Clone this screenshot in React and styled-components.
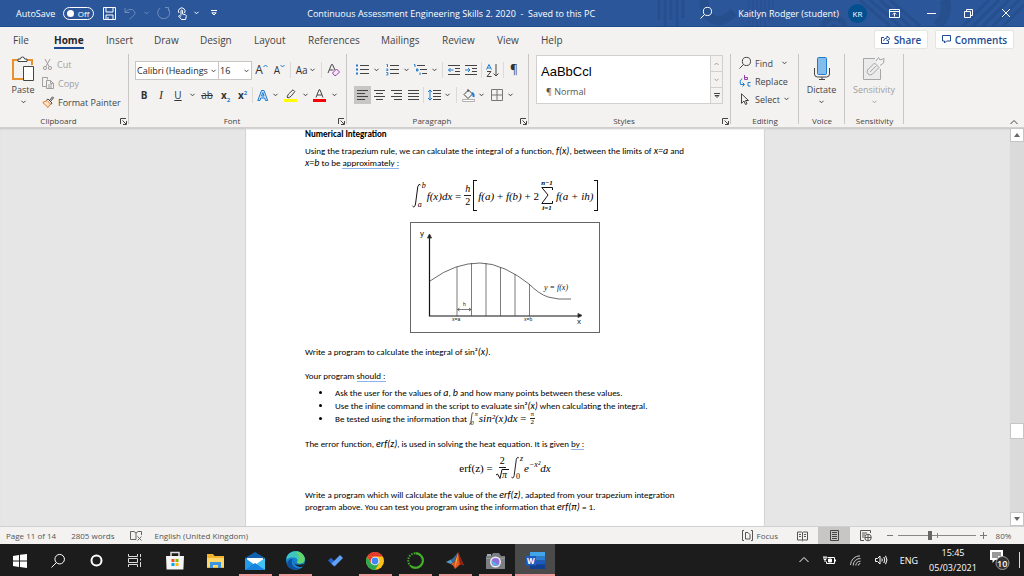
import React from 'react';
import styled, { createGlobalStyle } from 'styled-components';

const GlobalStyle = createGlobalStyle`
  * {
    box-sizing: border-box;
  }
  html, body, #root {
    height: 100%;
  }
  body {
    margin: 0;
    overflow: hidden;
    font-family: 'Open Sans', 'Noto Sans', sans-serif;
    font-size: 10px;
    color: #444;
  }
  button, select, input {
    font: inherit;
    color: inherit;
    margin: 0;
    padding: 0;
    border: 0;
    background: none;
  }
  svg {
    display: block;
    flex: none;
    overflow: visible;
  }
`;

const Window = styled.div`
  display: flex;
  flex-direction: column;
  height: 100vh;
  background: #e6e6e6;
`;

/* ---------- title bar ---------- */

const TitleBar = styled.header`
  position: relative;
  display: flex;
  align-items: center;
  height: 27px;
  flex: none;
  background: #2b579a;
  border-bottom: 1px solid #1f4a8c;
  color: #fff;
  font-size: 9px;
`;

const TitlePattern = styled.svg`
  position: absolute;
  top: 0;
  right: 0;
  overflow: hidden;
`;

const QuickAccess = styled.div`
  display: flex;
  align-items: center;
  flex: none;
  padding-left: 16px;
`;

const AutoSave = styled.label`
  display: flex;
  align-items: center;
  flex: none;
  gap: 8px;
  width: 84px;
`;

const Pill = styled.span`
  display: flex;
  align-items: center;
  justify-content: space-between;
  width: 31px;
  height: 13px;
  padding: 0 4px 0 3px;
  border: 1px solid #fff;
  border-radius: 7px;
  font-size: 8px;
  line-height: 11px;

  input {
    appearance: none;
    width: 7px;
    height: 7px;
    border-radius: 50%;
    background: #fff;
  }
`;

const DocTitle = styled.h1`
  flex: 1;
  margin: 0;
  padding-right: 20px;
  font-size: 9px;
  font-weight: 400;
  text-align: center;
  white-space: nowrap;
`;

const Account = styled.div`
  position: relative;
  display: flex;
  align-items: center;
  gap: 9px;
  padding-right: 9px;
`;

const UserName = styled.span`
  padding-left: 13px;
  white-space: nowrap;
`;

const Avatar = styled.span`
  width: 19px;
  height: 19px;
  border-radius: 50%;
  background: #03508f;
  font-size: 8px;
  line-height: 19px;
  text-align: center;
`;

const WindowButtons = styled.div`
  position: relative;
  display: flex;
`;

/* every icon button, the width decides how the row is spread */
const Tool = styled.button`
  display: flex;
  align-items: center;
  justify-content: center;
  flex: none;
  width: ${(p) => p.$w || 18}px;
  height: ${(p) => p.$h || 18}px;
  background: ${(p) => (p.$active ? '#c8c6c4' : 'transparent')};
  opacity: ${(p) => (p.disabled ? 0.4 : 1)};
`;

/* ---------- tabs ---------- */

const TabRow = styled.nav`
  display: flex;
  align-items: center;
  flex: none;
  height: 25px;
  padding: 0 10px 0 13px;
  background: #f3f2f1;
`;

const Tab = styled.button`
  display: flex;
  align-items: flex-end;
  width: ${(p) => p.$w}px;
  height: 25px;
  padding-bottom: 3px;
  white-space: nowrap;
  font-size: 10px;
  color: ${(p) => (p.$current ? '#262626' : '#444')};
  font-weight: ${(p) => (p.$current ? 700 : 400)};

  span {
    line-height: 14px;
    border-bottom: 2px solid ${(p) => (p.$current ? '#1e4a94' : 'transparent')};
  }
`;

const TabActions = styled.div`
  display: flex;
  gap: 7px;
  margin-left: auto;
`;

const ActionButton = styled.button`
  display: flex;
  align-items: center;
  justify-content: center;
  gap: 4px;
  width: ${(p) => p.$w}px;
  height: 19px;
  border: 1px solid #e6e4e2;
  border-radius: 2px;
  background: #fff;
  color: #1e4a94;
  font-size: 10px;
  font-weight: 600;
`;

/* ---------- ribbon ---------- */

const Ribbon = styled.section`
  display: flex;
  flex: none;
  height: 76px;
  padding-top: 2px;
  background: #f3f2f1;
  border-bottom: 1px solid #d2d0ce;
`;

const Group = styled.div`
  display: flex;
  flex-direction: column;
  width: ${(p) => p.$w}px;
  background: linear-gradient(#c8c6c4, #c8c6c4) right top / 1px 70px no-repeat;
`;

const GroupBody = styled.div`
  display: flex;
  flex: 1;
  flex-direction: ${(p) => (p.$row ? 'row' : 'column')};
  gap: ${(p) => p.$gap || 0}px;
  padding: ${(p) => p.$pad || '0'};
`;

const GroupFoot = styled.div`
  display: flex;
  align-items: center;
  height: 12px;
  font-size: 8px;
  line-height: 12px;

  span {
    flex: 1;
    text-align: center;
  }
`;

const ToolRow = styled.div`
  display: flex;
  align-items: center;
  height: 18px;
`;

const Rule = styled.i`
  flex: none;
  width: 1px;
  height: 16px;
  margin: 0 ${(p) => p.$r || 1}px 0 ${(p) => p.$l || 2}px;
  background: #dcdad8;
`;

const Letter = styled.span`
  font-size: ${(p) => p.$size || 10}px;
  line-height: 14px;
  font-weight: ${(p) => (p.$bold ? 700 : 400)};
  font-style: ${(p) => (p.$italic ? 'italic' : 'normal')};
  font-family: ${(p) => (p.$italic ? "'Liberation Serif', serif" : 'inherit')};
  text-decoration: ${(p) => p.$line || 'none'};
  color: #333;

  sub, sup {
    font-size: 6px;
    line-height: 0;
    color: #1f7bd0;
  }
`;

const Big = styled.button`
  display: flex;
  flex-direction: column;
  align-items: center;
  width: ${(p) => p.$w}px;
  padding-top: 2px;
  font-size: 9px;
  line-height: 14px;
  color: ${(p) => (p.disabled ? '#a19f9d' : '#444')};

  span {
    padding: 1px 0 3px;
  }
`;

const Stack = styled.div`
  display: flex;
  flex-direction: column;
  gap: 1px;
  padding-top: 1px;
`;

const Command = styled.button`
  display: flex;
  align-items: center;
  gap: 4px;
  height: 18px;
  font-size: 9px;
  white-space: nowrap;
  color: ${(p) => (p.disabled ? '#a19f9d' : '#444')};

  span {
    margin-right: ${(p) => p.$space || 0}px;
  }
`;

const Picker = styled.label`
  position: relative;
  display: block;
  width: ${(p) => p.$w}px;
  height: 19px;
  border: 1px solid #c8c6c4;
  border-left-width: ${(p) => (p.$joined ? 0 : 1)}px;
  background: #fff;

  select {
    appearance: none;
    width: 100%;
    height: 17px;
    padding: 0 8px 0 1px;
    font-size: 9px;
    color: #262626;
  }
  svg {
    position: absolute;
    right: 2px;
    top: 7px;
  }
`;

const Gallery = styled.div`
  display: flex;
  width: 187px;
  height: 49px;
  border: 1px solid #d2d0ce;
  background: #fff;
`;

const StyleCard = styled.button`
  display: flex;
  flex: 1;
  flex-direction: column;
  padding: 2px 0 0 4px;
  text-align: left;

  b {
    font: 400 13px 'Liberation Sans', Arial, sans-serif;
    line-height: 28px;
    color: #000;
  }
  span {
    padding-left: 5px;
    font-size: 9px;
    line-height: 12px;
    color: #555;
  }
`;

const GallerySteps = styled.div`
  display: flex;
  flex-direction: column;
  width: 12px;
  background: #f3f2f1;
  border-left: 1px solid #d2d0ce;

  button {
    display: flex;
    flex: 1;
    align-items: center;
    justify-content: center;
    border-bottom: 1px solid #d2d0ce;
  }
  button:last-child {
    border: 0;
  }
`;

const Collapse = styled.button`
  align-self: flex-end;
  margin: 0 6px 0 auto;
  padding-bottom: 2px;
`;

/* ---------- document ---------- */

const Workspace = styled.main`
  display: flex;
  flex: 1;
  min-height: 0;
`;

const Canvas = styled.div`
  flex: 1;
  overflow: hidden;
  box-shadow: inset 0 2px 2px -1px #c4c4c4;
`;

const Page = styled.article`
  width: 520px;
  min-height: 100%;
  margin: 0 auto;
  padding: 0 59px 12px;
  background: #fff;
  border: solid #d4d4d4;
  border-width: 0 1px;
  box-shadow: inset 0 2px 2px -1px #c4c4c4;
  font-family: Carlito, Lato, sans-serif;
  font-size: 9px;
  font-weight: 500;
  line-height: 12px;
  color: #000;
`;

const Heading = styled.h2`
  margin: 0;
  font-size: 9px;
  line-height: 12px;
`;

const Para = styled.p`
  margin: ${(p) => p.$top}px 0 0;
  white-space: nowrap;

  i {
    font-size: 10px;
    line-height: 0;
  }
  u {
    text-decoration: none;
    box-shadow: 0 1px 0 #8db4ea;
  }
`;

const Bullets = styled.ul`
  margin: 4px 0 0;
  padding: 0 0 0 27px;
  line-height: 13px;
  white-space: nowrap;

  li {
    padding-left: 3px;
  }
  li > i {
    font-size: 10px;
    line-height: 0;
  }
`;

const Formula = styled.div`
  display: flex;
  align-items: center;
  justify-content: center;
  height: ${(p) => p.$h}px;
  font-family: 'Liberation Serif', serif;
  font-size: 11px;
  line-height: 12px;
  white-space: pre;

  sup {
    font-size: 8px;
    line-height: 0;
  }
`;

const Inline = styled.span`
  display: inline-flex;
  align-items: center;
  height: 13px;
  vertical-align: top;
  font-family: 'Liberation Serif', serif;
  font-size: 11px;
`;

const Frac = styled.span`
  display: inline-flex;
  flex-direction: column;
  align-items: center;
  margin: 0 2px 0 3px;
  font-size: ${(p) => p.$size || 10}px;
  line-height: ${(p) => p.$lh || 12}px;

  > span:first-child {
    padding: 0 1px;
    border-bottom: 1px solid #222;
  }
`;

const Limits = styled.span`
  display: inline-flex;
  flex-direction: column;
  justify-content: space-between;
  height: ${(p) => p.$h}px;
  margin: 0 1px 0 -3px;
  font-size: ${(p) => p.$size || 8}px;
  line-height: ${(p) => p.$size || 8}px;

  > i:first-child {
    padding-left: 4px;
  }
`;

const Sum = styled.span`
  display: inline-flex;
  flex-direction: column;
  align-items: center;
  margin: 0 3px 0 2px;
  font-size: 7px;
  font-weight: 700;
  line-height: 6px;
  gap: 1px;
`;

const Bracket = styled.span`
  display: flex;
  align-items: center;
  height: 29px;

  &::before, &::after {
    content: '';
    width: 3px;
    height: 29px;
    border: 1px solid #111;
  }
  &::before {
    border-right: 0;
    margin-right: 1px;
  }
  &::after {
    border-left: 0;
    margin-left: 1px;
  }
`;

const Figure = styled.figure`
  display: flex;
  justify-content: center;
  margin: 0;
`;

const ScrollBar = styled.div`
  display: flex;
  flex-direction: column;
  width: 14px;
  background: #dadada;

  button {
    display: flex;
    align-items: center;
    justify-content: center;
    height: 14px;
    background: #fff;
    border: 1px solid #c6c6c6;
  }
  i {
    flex: 283 0 0;
  }
  b {
    height: 16px;
    background: #fff;
    border: 1px solid #c6c6c6;
  }
  b + i {
    flex: 73 0 0;
  }
`;

/* ---------- status bar ---------- */

const StatusBar = styled.footer`
  display: flex;
  align-items: center;
  flex: none;
  height: 18px;
  padding: 0 7px 0 6px;
  background: #f3f2f1;
  border-top: 1px solid #d2d0ce;
  font-size: 8px;
  color: #555;
`;

const StatusItem = styled.button`
  display: flex;
  align-items: center;
  gap: 4px;
  margin-right: ${(p) => p.$end || 15}px;
  white-space: nowrap;
`;

const Views = styled.div`
  display: flex;
  align-items: center;
  margin-left: auto;
`;

const Zoom = styled.input`
  appearance: none;
  width: 78px;
  height: 11px;
  background: linear-gradient(#8a8886, #8a8886) 0 5px / 100% 1px no-repeat,
    linear-gradient(#8a8886, #8a8886) 39px 3px / 1px 5px no-repeat;

  &::-webkit-slider-thumb {
    appearance: none;
    width: 4px;
    height: 9px;
    background: #666;
  }
`;

/* ---------- taskbar ---------- */

const TaskBar = styled.footer`
  display: flex;
  flex: none;
  height: 32px;
  background: #1c1c1c;
  color: #fff;
`;

const TaskButton = styled.button`
  display: flex;
  align-items: center;
  justify-content: center;
  width: ${(p) => p.$w || 40}px;
  padding-top: 1px;
  background: ${(p) => (p.$front ? '#4a4a4a' : 'transparent')};
  background-image: ${(p) =>
    p.$open ? 'linear-gradient(#f09a9d, #f09a9d)' : 'none'};
  background-repeat: no-repeat;
  background-position: bottom;
  background-size: ${(p) => (p.$front ? '100%' : '33px')} 2px;
`;

const Tray = styled.div`
  display: flex;
  align-items: center;
  margin-left: auto;
  padding-right: 3px;
`;

const Clock = styled.button`
  width: 58px;
  font-size: 9px;
  line-height: 15px;
  text-align: center;
`;

const Lang = styled(Tool)`
  font-size: 9px;
`;

/* ---------- icons ---------- */

const Svg = ({ w = 14, h = w, c = '#444', s = 1, children }) => (
  <svg width={w} height={h} viewBox={`0 0 ${w} ${h}`} fill="none" stroke={c} strokeWidth={s} aria-hidden="true">
    {children}
  </svg>
);

const Chevron = ({ c = '#444' }) => (
  <Svg w={5} h={4} c={c}><path d="M.5 .8l2 2 2-2" /></Svg>
);

const ChevronUp = ({ w = 7, c = '#444' }) => (
  <Svg w={w} h={5} c={c}><path d={`M.5 4L${w / 2} ${4.5 - w / 2}L${w - 0.5} 4`} /></Svg>
);

const Drop = ({ w = 8, label }) => (
  <Tool $w={w} aria-label={label}><Chevron /></Tool>
);

const Launcher = () => (
  <Tool $w={12} $h={10} aria-label="More options">
    <Svg w={7}><path d="M.5 6V.5H6M2.500 2.500l3.500 3.500M6.500 3v3.500H3" /></Svg>
  </Tool>
);

const Lens = ({ w = 13, c = '#fff' }) => (
  <Svg w={w} c={c}><circle cx={w * 0.62} cy={w * 0.37} r={w * 0.34} /><path d={`M${w * 0.39} ${w * 0.61}L.5 ${w - 0.5}`} /></Svg>
);

const lines = (rows) => rows.map(([x, y, x2]) => <path key={y} d={`M${x} ${y}.5H${x2}`} />);

const AlignIcon = ({ rows }) => <Svg w={13} h={11}>{lines(rows)}</Svg>;

function TitleBackdrop() {
  return (
    <TitlePattern width="370" height="26" fill="none" stroke="#264f8e" aria-hidden="true">
      <path d="M5 0v20M11 0v26M17 0v20M23 0v26M29 0v18" strokeWidth="3" />
      <path d="M50 0c0 20 14 28 30 12" strokeWidth="9" />
      <path d="M95 0v26M99 0v26M103 0v26M107 0v26M111 0v26M115 0v22M119 0v22" />
      <circle cx="180" cy="29" r="11" strokeWidth="6" />
      <circle cx="180" cy="29" r="3" strokeWidth="4" />
      <path d="M206 0l30 26M216 0l30 26M226 0l30 26M236 0l30 26" strokeWidth="3" />
      <path d="M291 0q4 15-8 26" strokeWidth="10" />
      <path d="M309 26l26-26M319 26l26-26M329 26l26-26M339 26l26-26M349 26l21-21" strokeWidth="3" />
    </TitlePattern>
  );
}

function Header() {
  return (
    <TitleBar>
      <TitleBackdrop />
      <QuickAccess>
        <AutoSave>
          AutoSave
          <Pill><input type="checkbox" role="switch" />Off</Pill>
        </AutoSave>
        <Tool aria-label="Save">
          <Svg w={13} c="#fff"><path d="M.5.5h12v12H.5zM3 .5v4.500h7V.5M3 12.500V8h7v4.500M5 10v2.500" /></Svg>
        </Tool>
        <Tool $w={24} disabled aria-label="Undo">
          <Svg w={12} h={12} c="#d5e0f0"><path d="M1 1v4.500h4.500M1.300 5.200C4 2 8 1.500 10 4s1 4-4.500 8" /></Svg>
        </Tool>
        <Tool $w={8} disabled aria-label="Undo list"><Chevron c="#d5e0f0" /></Tool>
        <Tool $w={24} disabled aria-label="Repeat">
          <Svg w={13} c="#d5e0f0"><path d="M9 .5h3.500V4M12 1.500a6 6 0 1 1-8-.5" /></Svg>
        </Tool>
        <Tool $w={16} aria-label="Touch mode">
          <Svg w={10} h={13} c="#fff"><path d="M2 6a3.300 3.300 0 1 1 5.500 0M4 8.500V3.500q.8-1 1.600 0V7l3 .8q.9.4.7 1.700L8.500 12.500h-4L1.500 9q.8-1.200 2.500.5" /></Svg>
        </Tool>
        <Tool $w={12} aria-label="Touch mode list"><Chevron c="#fff" /></Tool>
        <Tool $w={24} aria-label="Customise toolbar">
          <Svg w={6} h={6} c="#fff"><path d="M0 .5h6M.8 2.800h4.400L3 5z" /></Svg>
        </Tool>
      </QuickAccess>
      <DocTitle>Continuous Assessment Engineering Skills 2. 2020 &nbsp;-&nbsp; Saved to this PC</DocTitle>
      <Account>
        <Tool $w={20} aria-label="Search"><Lens w={12} /></Tool>
        <UserName>Kaitlyn Rodger (student)</UserName>
        <Avatar>KR</Avatar>
      </Account>
      <WindowButtons>
        <Tool $w={37} aria-label="Ribbon display options">
          <Svg w={11} h={9} c="#fff"><path d="M.5.5h10v8H.5zM.5 2.500h10M5.500 7.500V4M3.800 5.500l1.700-1.700 1.700 1.700" /></Svg>
        </Tool>
        <Tool $w={37} aria-label="Minimise"><Svg w={9} h={1} c="#fff"><path d="M0 .5h9" /></Svg></Tool>
        <Tool $w={37} aria-label="Restore">
          <Svg w={9} c="#fff"><path d="M.5 2.500h6v6h-6zM2.500 2.500v-2h6v6h-2" /></Svg>
        </Tool>
        <Tool $w={37} aria-label="Close"><Svg w={8} c="#fff"><path d="M0 0l8 8M8 0L0 8" /></Svg></Tool>
      </WindowButtons>
    </TitleBar>
  );
}

const TABS = [
  ['File', 41], ['Home', 52], ['Insert', 48], ['Draw', 46], ['Design', 54], ['Layout', 54],
  ['References', 73], ['Mailings', 61], ['Review', 55], ['View', 44], ['Help', 40],
];

function Tabs() {
  return (
    <TabRow>
      {TABS.map(([name, w]) => (
        <Tab key={name} $w={w} $current={name === 'Home'}><span>{name}</span></Tab>
      ))}
      <TabActions>
        <ActionButton $w={54}>
          <Svg w={9} c="#1e4a94"><path d="M3 2.500H.5v6h7V6M2.500 6Q3 3 6 3V1l3 2.700L6 6V4.500" /></Svg>
          Share
        </ActionButton>
        <ActionButton $w={79}>
          <Svg w={9} c="#1e4a94"><path d="M.5.5h8v5.500h-4L2.500 8V6h-2z" /></Svg>
          Comments
        </ActionButton>
      </TabActions>
    </TabRow>
  );
}

function Clipboard() {
  return (
    <Group $w={129}>
      <GroupBody $row $pad="0 0 0 4px">
        <Big $w={38}>
          <Svg w={22} h={26}>
            <path d="M6 4H1v19h10M15 4h5v5" stroke="#e8912d" strokeWidth="2" />
            <path d="M6 5.500V3h2.500a2 2 0 0 1 4 0H15v2.500z" fill="#fff" />
            <path d="M11.500 10.500h10v14h-10z" fill="#fff" />
          </Svg>
          <span>Paste</span>
          <Chevron />
        </Big>
        <Stack>
          <Command disabled>
            <Svg w={11} c="#a19f9d"><path d="M3 0l4 7.500M8 0L4 7.500" /><circle cx="3" cy="9" r="1.600" /><circle cx="8" cy="9" r="1.600" /></Svg>
            <span>Cut</span>
          </Command>
          <Command disabled>
            <Svg w={12} h={12} c="#a19f9d"><path d="M4 9.500H.5v-9h5v2M4.500 3.500h4l3 3v5h-7zM8.500 3.500v3h3M6 8h4M6 10h4" /></Svg>
            <span>Copy</span>
          </Command>
          <Command>
            <Svg w={12} h={12}>
              <path d="M.8 6.500l4.200-2 3.500 3.500-2.500 3.500z" fill="#fbe3cc" stroke="#e87722" />
              <path d="M4.500 4l1.500-1 4 4-1 1.500M7.500 4.500L10.500.8l1 1L8.500 5.500" />
            </Svg>
            <span>Format Painter</span>
          </Command>
        </Stack>
      </GroupBody>
      <GroupFoot><span>Clipboard</span><Launcher /></GroupFoot>
    </Group>
  );
}

function Font() {
  return (
    <Group $w={218}>
      <GroupBody $pad="7px 0 0 6px" $gap={7}>
        <ToolRow>
          <Picker $w={84}>
            <select aria-label="Font"><option>Calibri (Headings</option></select>
            <Chevron />
          </Picker>
          <Picker $w={33} $joined>
            <select aria-label="Font size"><option>16</option></select>
            <Chevron />
          </Picker>
          <Tool $w={19} aria-label="Grow font">
            <Letter $size={12}>A</Letter><Svg w={5} h={12} c="#1f7bd0"><path d="M.5 3l2-2 2 2" /></Svg>
          </Tool>
          <Tool $w={17} aria-label="Shrink font">
            <Letter>A</Letter><Svg w={5} h={12} c="#1f7bd0"><path d="M.5 1l2 2 2-2" /></Svg>
          </Tool>
          <Rule />
          <Tool $w={27} aria-label="Change case"><Letter>Aa</Letter>&nbsp;<Chevron /></Tool>
          <Rule $r={3} />
          <Tool $w={17} aria-label="Clear formatting">
            <Svg w={13} h={12}><path d="M1 9L4.500.5h1L8 6M2.500 6h4" /><path d="M5.500 9l4-4 3 3-3.500 3.500H7.500z" fill="#f3e6f7" stroke="#9b3fae" /></Svg>
          </Tool>
        </ToolRow>
        <ToolRow>
          <Tool aria-label="Bold"><Letter $bold>B</Letter></Tool>
          <Tool $w={16} aria-label="Italic"><Letter $size={12} $italic>I</Letter></Tool>
          <Tool aria-label="Underline"><Letter $line="underline">U</Letter></Tool>
          <Drop w={10} label="Underline style" />
          <Tool $w={20} aria-label="Strikethrough"><Letter $line="line-through">ab</Letter></Tool>
          <Tool $w={17} aria-label="Subscript"><Letter $bold>x<sub>2</sub></Letter></Tool>
          <Tool $w={17} aria-label="Superscript"><Letter $bold>x<sup>2</sup></Letter></Tool>
          <Rule $l={1} />
          <Tool $w={17} aria-label="Text effects">
            <Svg w={12} h={11} c="#1f7bd0"><path d="M.8 10.500L4.500.5h2.500l3.700 10H8.500l-.8-2.500H3.800L3 10.500zM4.500 6h2.500L5.800 2.500z" fill="#cfe4f7" /></Svg>
          </Tool>
          <Drop w={8} label="Text effects list" />
          <Tool $w={22} aria-label="Highlight">
            <Svg w={13} h={13}><path d="M3 8l1.500-3L9 .8l1.800 1.800L7 7.300 4 9z" /><path d="M0 11.500h13" stroke="#ff0" strokeWidth="3" /></Svg>
          </Tool>
          <Drop w={8} label="Highlight colours" />
          <Tool $w={21} aria-label="Font colour">
            <Svg w={13} h={13}><path d="M3 8.500L6 .8h1l3 7.700M4 6h5" /><path d="M0 11.500h13" stroke="#f00" strokeWidth="3" /></Svg>
          </Tool>
          <Drop w={8} label="Font colours" />
        </ToolRow>
      </GroupBody>
      <GroupFoot><span>Font</span><Launcher /></GroupFoot>
    </Group>
  );
}

function Paragraph() {
  const blue = '#1f7bd0';
  return (
    <Group $w={182}>
      <GroupBody $pad="7px 0 0 7px" $gap={7}>
        <ToolRow>
          <Tool $w={17} aria-label="Bullets">
            <Svg w={13} h={12}>{lines([[4, 1, 13], [4, 5, 13], [4, 9, 13]])}<path d="M0 1.500h2M0 5.500h2M0 9.500h2" stroke={blue} strokeWidth="2" /></Svg>
          </Tool>
          <Drop w={11} label="Bullet library" />
          <Tool $w={20} aria-label="Numbering">
            <Svg w={13} h={12}>{lines([[4, 1, 13], [4, 5, 13], [4, 9, 13]])}<path d="M.5.5h1v2.500M.3 5h1.500v1.500H.3M.3 8.500h1.500v2.500H.3" stroke={blue} /></Svg>
          </Tool>
          <Drop w={8} label="Numbering library" />
          <Tool $w={20} aria-label="Multilevel list">
            <Svg w={13} h={12}>{lines([[3, 1, 11], [6, 5, 13], [8, 9, 13]])}<path d="M0 .5h1v2.500M2.500 5H4v2H2.500zM6 8.500v2.500" stroke={blue} /></Svg>
          </Tool>
          <Drop w={8} label="List library" />
          <Rule $l={4} $r={3} />
          <Tool $w={16} aria-label="Decrease indent">
            <Svg w={12} h={11}>{lines([[0, 0, 12], [7, 3, 12], [7, 6, 12], [0, 9, 12]])}<path d="M5.500 5H.5M2.500 3l-2 2 2 2" stroke={blue} /></Svg>
          </Tool>
          <Tool $w={17} aria-label="Increase indent">
            <Svg w={12} h={11}>{lines([[0, 0, 12], [7, 3, 12], [7, 6, 12], [0, 9, 12]])}<path d="M0 5h5M3 3l2 2-2 2" stroke={blue} /></Svg>
          </Tool>
          <Rule />
          <Tool $w={19} aria-label="Sort">
            <Svg w={13} h={13}><path d="M.5 5.500L3 .5l2.500 5M1.500 4h3" stroke={blue} /><path d="M1 7.500h4l-4 5h4.500M10 0v12M7.500 9.500L10 12l2.500-2.500" /></Svg>
          </Tool>
          <Rule $l={1} />
          <Tool aria-label="Show paragraph marks"><Letter $size={12}>¶</Letter></Tool>
        </ToolRow>
        <ToolRow>
          <Tool $w={17} $active aria-label="Align left"><AlignIcon rows={[[1, 0, 12], [1, 3, 9], [1, 6, 12], [1, 9, 9]]} /></Tool>
          <Tool $w={17} aria-label="Centre"><AlignIcon rows={[[1, 0, 12], [3, 3, 10], [1, 6, 12], [3, 9, 10]]} /></Tool>
          <Tool $w={17} aria-label="Align right"><AlignIcon rows={[[1, 0, 12], [4, 3, 12], [1, 6, 12], [4, 9, 12]]} /></Tool>
          <Tool $w={17} aria-label="Justify"><AlignIcon rows={[[1, 0, 12], [1, 3, 12], [1, 6, 12], [1, 9, 12]]} /></Tool>
          <Rule $l={1} />
          <Tool aria-label="Line spacing">
            <Svg w={13} h={12}>{lines([[5, 1, 13], [5, 4, 13], [5, 7, 13], [5, 10, 13]])}<path d="M2 .8v10.500M0 3l2-2 2 2M0 9l2 2 2-2" stroke={blue} /></Svg>
          </Tool>
          <Drop w={8} label="Line spacing list" />
          <Rule $l={5} $r={4} />
          <Tool $w={15} aria-label="Shading">
            <Svg w={13} h={13}><path d="M2 5.500L6.500 1l4 4L6 9.500zM6 0v3" /><path d="M10 4q2 1 1.500 4" stroke={blue} strokeWidth="2" /><path d="M.5 10.500h12v2H.5z" fill="#fff" stroke="#b0b0b0" /></Svg>
          </Tool>
          <Drop w={11} label="Shading colours" />
          <Tool $w={19} aria-label="Borders">
            <Svg w={12} h={12}><path d="M.5.5h11v11H.5z" stroke="#777" /><path d="M6 0v12M0 6h12" stroke="#777" /></Svg>
          </Tool>
          <Drop w={9} label="Border list" />
        </ToolRow>
      </GroupBody>
      <GroupFoot><span>Paragraph</span><Launcher /></GroupFoot>
    </Group>
  );
}

function RibbonBar() {
  return (
    <Ribbon>
      <Clipboard />
      <Font />
      <Paragraph />
      <Group $w={202}>
        <GroupBody $pad="1px 0 0 7px">
          <Gallery>
            <StyleCard><b>AaBbCcl</b><span>¶ Normal</span></StyleCard>
            <GallerySteps>
              <button aria-label="Previous styles"><ChevronUp w={5} c="#a19f9d" /></button>
              <button aria-label="Next styles"><Chevron c="#a19f9d" /></button>
              <button aria-label="All styles"><Svg w={6} h={6}><path d="M0 .5h6M1 2.500h4L3 4.500z" /></Svg></button>
            </GallerySteps>
          </Gallery>
        </GroupBody>
        <GroupFoot><span>Styles</span><Launcher /></GroupFoot>
      </Group>
      <Group $w={68}>
        <GroupBody $pad="0 0 0 8px">
          <Command $space={5}><Lens w={12} c="#444" /><span>Find</span><Chevron /></Command>
          <Command>
            <Svg w={12} h={12}><path d="M5.500 0v4.500h3V2.500h-3" stroke="#9b3fae" /><path d="M11.500 7.500h-2.500v3.500h2.500M3 3.500Q0 6 1.500 9.500H5M3.500 7.500l2 2-2 2" stroke="#1f7bd0" /></Svg>
            <span>Replace</span>
          </Command>
          <Command><Svg w={12} h={12}><path d="M2.500.8v9.500L5 8l1.500 3.500 1.500-.7L6.500 7.500h3z" /></Svg><span>Select</span><Chevron /></Command>
        </GroupBody>
        <GroupFoot><span>Editing</span></GroupFoot>
      </Group>
      <Group $w={46}>
        <GroupBody>
          <Big $w={45}>
            <Svg w={16} h={26}>
              <rect x="3.500" y="1.500" width="9" height="17" rx="1" fill="#83bdec" stroke="#1f7bd0" />
              <path d="M.5 12v6q0 3 3 3h9q3 0 3-3v-6M8 21v3M5 23.500h6" />
            </Svg>
            <span>Dictate</span>
            <Chevron />
          </Big>
        </GroupBody>
        <GroupFoot><span>Voice</span></GroupFoot>
      </Group>
      <Group $w={59}>
        <GroupBody>
          <Big $w={58} disabled>
            <Svg w={22} h={26} c="#a6a6a6">
              <path d="M12 2.500H.5v21h17V13" fill="#ebebeb" />
              <path d="M4.500 14l7-7 4.500 4.500-7 7q-2.500 1-4-.5t-.5-4zM7 16l6-6M13 5l2.500-3.500L17 4l4-1.500L20.500 7 17 9.500" />
            </Svg>
            <span>Sensitivity</span>
            <Chevron c="#a6a6a6" />
          </Big>
        </GroupBody>
        <GroupFoot><span>Sensitivity</span></GroupFoot>
      </Group>
      <Collapse aria-label="Collapse the ribbon"><ChevronUp w={8} /></Collapse>
    </Ribbon>
  );
}

const Integral = ({ h = 25 }) => (
  <svg width={h * 0.36} height={h} viewBox="0 0 9 25" fill="none" stroke="#111" aria-hidden="true">
    <path d="M8.500 2Q7 0 5.800 3.500L3.500 21Q2.500 25.500.5 23" strokeWidth={h < 20 ? 1.4 : 1} />
  </svg>
);

function Graph() {
  return (
    <svg width="190" height="111" viewBox="0 0 190 111" fill="none" stroke="#444" role="img" aria-label="Area under y = f(x) split into strips">
      <rect x=".5" y=".5" width="189" height="110" stroke="#666" />
      <path d="M19.500 15v79H170" stroke="#111" strokeWidth="1.200" />
      <path d="M17.500 16l2-4 2 4zM168 91.500l4 2-4 2z" fill="#111" />
      <path d="M20 59q14-10 26-14t24-4 25 6 24 15q10 10 19 13 10 3 23 2" strokeWidth=".8" />
      <path d="M47 45v49M61.500 41v53M76 41v53M90.500 45v49M105 52v42M119.500 62v32M47.500 87.500h13" strokeWidth=".7" />
      <path d="M49.500 86l-2 1.500 2 1.500M59 86l2 1.500-2 1.500" strokeWidth=".8" />
      <g fill="#111" stroke="none" fontFamily="'Liberation Sans', Arial, sans-serif">
        <text x="10" y="14" fontSize="8">y</text>
        <text x="167" y="102" fontSize="8">x</text>
        <text x="53" y="84" fontSize="5">h</text>
        <text x="42" y="99" fontSize="5">x=a</text>
        <text x="114" y="99" fontSize="5">x=b</text>
        <text x="134" y="68" fontSize="8" fontFamily="'Liberation Serif', serif" fontStyle="italic">y = f(x)</text>
      </g>
    </svg>
  );
}

function Document() {
  return (
    <Page>
      <Heading>Numerical Integration</Heading>
      <Para $top={5}>
        Using the trapezium rule, we can calculate the integral of a function, <i>f(x)</i>, between the limits of <i>x=a</i> and<br />
        <i>x=b</i> to be <u>approximately :</u>
      </Para>
      <Formula $h={53}>
        <Integral />
        <Limits $h={27}><i>b</i><i>a</i></Limits>
        <i>f(x)dx</i> =
        <Frac><span><i>h</i></span><span>2</span></Frac>
        <Bracket>
          <span><i>f(a)</i> + <i>f(b)</i> + 2</span>
          <Sum>
            <i>n−1</i>
            <Svg w={12} h={17} c="#111"><path d="M11.500 3V.5H.8L7 8 .8 16.500h10.700V14" /></Svg>
            <i>i=1</i>
          </Sum>
          <i>f(a + ih)</i>
        </Bracket>
      </Formula>
      <Figure><Graph /></Figure>
      <Para $top={13}>Write a program to calculate the integral of sin²<i>(x)</i>.</Para>
      <Para $top={12}>Your program <u>should :</u></Para>
      <Bullets>
        <li>Ask the user for the values of <i>a</i>, <i>b</i> and how many points between these values.</li>
        <li>Use the inline command in the script to evaluate sin²<i>(x)</i> when calculating the integral.</li>
        <li>
          Be tested using the information that{' '}
          <Inline>
            <Integral h={13} />
            <Limits $h={15} $size={6}><i>π</i><i>0</i></Limits>
            <i>sin²(x)dx</i>&nbsp;=
            <Frac $size={7} $lh={7}><span>π</span><span>2</span></Frac>
          </Inline>
        </li>
      </Bullets>
      <Para $top={13}>
        The error function, <i>erf(z)</i>, is used in solving the heat equation. It is given <u>by :</u>
      </Para>
      <Formula $h={35}>
        erf(z) =
        <Frac>
          <span>2</span>
          <Svg w={13} h={12} c="#111"><path d="M0 7l1.500-1L4 10.500 6 1.500h7" /><text x="6" y="10" fontSize="10" fontStyle="italic" fill="#111" stroke="none">π</text></Svg>
        </Frac>
        <Integral h={23} />
        <Limits $h={26}><i>z</i><span>0</span></Limits>
        <i>e<sup>−x²</sup>dx</i>
      </Formula>
      <Para $top={4}>
        Write a program which will calculate the value of the <i>erf(z)</i>, adapted from your trapezium integration<br />
        program above. You can test you program using the information that <i>erf(π)</i> = 1.
      </Para>
    </Page>
  );
}

function Status() {
  return (
    <StatusBar>
      <StatusItem>Page 11 of 14</StatusItem>
      <StatusItem>2805 words</StatusItem>
      <StatusItem $end={13} aria-label="Proofing">
        <Svg w={12} h={11} c="#666"><path d="M6 9.500H.5v-8H4L6 3l2-1.500h3.500V5M6 3v6.500M7.500 6.500l4 4M11.500 6.500l-4 4" /></Svg>
      </StatusItem>
      <StatusItem>English (United Kingdom)</StatusItem>
      <Views>
        <StatusItem $end={8}>
          <Svg w={11} h={11} c="#555"><path d="M2 .5H.5v10H2M9 .5h1.500v10H9M3.500 2.500h2.500l2 2v4.500H3.500z" /></Svg>
          Focus
        </StatusItem>
        <Tool $w={32} $h={17} aria-label="Read mode">
          <Svg w={11} h={10} c="#555"><path d="M5.500 1.500v8M.5 1h4l1 .8 1-.8h4v8h-4l-1 .8-1-.8h-4zM2 3.500h2M2 5.500h2M7 3.500h2M7 5.500h2" /></Svg>
        </Tool>
        <Tool $w={32} $h={17} $active aria-label="Print layout">
          <Svg w={9} h={11} c="#444"><path d="M.5.500h8v10h-8zM2 2.500h5M2 4.500h5M2 6.500h5M2 8.500h5" /></Svg>
        </Tool>
        <Tool $w={32} $h={17} aria-label="Web layout">
          <Svg w={12} h={11} c="#555"><path d="M4 10.500H.5V.5h10V3M2 3h5M2 5h3M2 7h2" /><circle cx="8" cy="7.500" r="3.300" /><path d="M5 7.500h6M8 4.500v6" /></Svg>
        </Tool>
        <Tool $w={16} aria-label="Zoom out"><Svg w={7} h={1} c="#777"><path d="M0 .5h6" /></Svg></Tool>
        <Zoom type="range" min="0" max="100" defaultValue="40" aria-label="Zoom" />
        <Tool $w={14} aria-label="Zoom in"><Svg w={7} c="#777"><path d="M0 3.500h7M3.500 0v7" /></Svg></Tool>
        <Tool $w={27}>80%</Tool>
      </Views>
    </StatusBar>
  );
}

function Apps() {
  return (
    <>
      <TaskButton $w={39} aria-label="Start">
        <Svg w={14} c="none"><path d="M0 2l6-1v5.500H0zM7 .8L14 0v6.500H7zM0 7.500h6V13l-6-1zM7 7.500h7V14l-7-.9z" fill="#fff" /></Svg>
      </TaskButton>
      <TaskButton $w={38} aria-label="Search"><Lens w={14} /></TaskButton>
      <TaskButton $w={38} aria-label="Cortana"><Svg w={13} c="#fff" s={2}><circle cx="6.500" cy="6.500" r="5" /></Svg></TaskButton>
      <TaskButton $w={40} aria-label="Task view">
        <Svg w={14} h={13} c="#ddd"><path d="M.5 0v2.500h9V0M.5 4.500h9v4h-9zM.5 13v-2.500h9V13M12.500 0v3M12.500 4.500v2M12.500 8v5" /></Svg>
      </TaskButton>
      <TaskButton aria-label="Store">
        <Svg w={18} h={20} c="none">
          <path d="M5 6V1.500h8V6" stroke="#ddd" strokeWidth="1.500" />
          <path d="M0 5h18l-.6 13.500H.6z" fill="#f4f4f4" />
          <path d="M5.500 8h3v3h-3z" fill="#f25022" /><path d="M9.500 8h3v3h-3z" fill="#7fba00" />
          <path d="M5.500 12h3v3h-3z" fill="#00a4ef" /><path d="M9.500 12h3v3h-3z" fill="#ffb900" />
        </Svg>
      </TaskButton>
      <TaskButton aria-label="File Explorer">
        <Svg w={17} h={14} c="none">
          <path d="M0 0h6l1.500 2H17v12H0z" fill="#f0b52c" /><path d="M0 4h17v9H0z" fill="#ffd766" />
          <path d="M3 14V8h11v6h-3v-3H6v3z" fill="#3d94df" />
        </Svg>
      </TaskButton>
      <TaskButton $open aria-label="Mail">
        <Svg w={20} h={18} c="none">
          <path d="M0 6l10-6 10 6v12H0z" fill="#1260ad" /><path d="M2 6h16v5l-8 4-8-4z" fill="#fff" />
          <path d="M0 6l10 7L0 18z" fill="#249be8" /><path d="M20 6l-10 7 10 5z" fill="#44c1f4" /><path d="M0 18l10-7 10 7z" fill="#1684dc" />
        </Svg>
      </TaskButton>
      <TaskButton $open aria-label="Edge">
        <Svg w={19} c="none">
          <circle cx="9.500" cy="9.500" r="9.500" fill="#1682cf" />
          <path d="M.5 7C2 1 8-1 13 .8c5 2 7 7 5 10-2 2.500-7 2-7 .2 2-2-1-5-4-4.500C4 6.500 1.500 7 .5 9z" fill="#3fc6c0" />
          <path d="M11 .3c7 1.500 9 7.500 7 10.500-2 2.500-7 2-7 .2 3-3 2-7-1-10z" fill="#62d66a" />
          <path d="M6.500 8C4 13 8 18 14 17 9 20.500 2 18 1 13q1-5 5.500-5z" fill="#0d4f9e" />
          <path d="M7.500 10q.5 5.500 10.500 3l-1 2.500q-7 2-9.500-5.500z" fill="#1c1c1c" />
        </Svg>
      </TaskButton>
      <TaskButton aria-label="To Do">
        <Svg w={15} h={13} c="none"><path d="M0 6.500L3 3.800l5 5L5.500 12z" fill="#2564cf" /><path d="M12 1l3 3-8.500 8.500L3.500 9.500z" fill="#5ea1f7" /></Svg>
      </TaskButton>
      <TaskButton $open aria-label="Chrome">
        <Svg w={18} c="none">
          <circle cx="9" cy="9" r="9" fill="#fbc116" />
          <path d="M1.200 4.500A9 9 0 0 1 16.800 4.500H9z" fill="#e33b2e" /><path d="M1.200 4.500A9 9 0 0 0 9 18l4-6.500H5.100z" fill="#2da94f" />
          <path d="M1.200 4.500L5 11l4-6.500z" fill="#e33b2e" />
          <circle cx="9" cy="9" r="4.300" fill="#fff" /><circle cx="9" cy="9" r="3.400" fill="#4285f4" />
        </Svg>
      </TaskButton>
      <TaskButton $open aria-label="Anaconda">
        <Svg w={17} c="#43b02a" s={2}><path d="M8.500 1.200a7.300 7.300 0 1 1-4.500 13" s={3} /><circle cx="8.500" cy="8.500" r="7.300" strokeDasharray="1.500 1.200" /></Svg>
      </TaskButton>
      <TaskButton $open aria-label="MATLAB">
        <Svg w={18} h={17} c="none">
          <path d="M0 10l5-2.500 2 3L4.500 12z" fill="#4f9bc9" /><path d="M5 7.500Q8 6 12 0L9 9l-2 2z" fill="#3b6c9c" />
          <path d="M4.500 12l4-2Q11 5 12 0c2 5 4 9 6 13.500q-3-2-4.500-.5T9 17q-1.500-4-4.500-5z" fill="#dd5a22" /><path d="M12 0c2 5 4 9 6 13.500q-3-2-4 0Q13 7 12 0z" fill="#8d2214" />
          <path d="M12 1q-1 10-3 15 0-8 3-15z" fill="#f9a94b" />
        </Svg>
      </TaskButton>
      <TaskButton $open aria-label="Camera">
        <Svg w={19} h={16} c="none">
          <path d="M0 3h5l2-3h6l2 3h4v13H0z" fill="#7b7f83" /><path d="M1 1h4v2H1z" fill="#a7abae" /><path d="M0 5h19v1H0z" fill="#96999c" />
          <circle cx="9.500" cy="9" r="5.500" fill="#eee" /><circle cx="9.500" cy="9" r="4" fill="#8f70d8" /><path d="M6 8a4 4 0 0 0 6 4z" fill="#43bfe8" />
        </Svg>
      </TaskButton>
      <TaskButton $open $front aria-label="Word">
        <Svg w={19} h={17} c="none">
          <path d="M4 0h15v4.500H4z" fill="#41a5ee" /><path d="M4 4.500h15v4H4z" fill="#2b7cd3" /><path d="M4 8.500h15v4H4z" fill="#185abd" /><path d="M4 12.500h15V17H4z" fill="#103f91" />
          <path d="M0 4h10v9.500H0z" fill="#1b5cbe" />
          <text x="1" y="11.500" fontSize="8" fontWeight="700" fill="#fff">W</text>
        </Svg>
      </TaskButton>
    </>
  );
}

function SystemTray() {
  return (
    <Tray>
      <Tool $w={24} aria-label="Hidden icons"><ChevronUp w={10} c="#fff" /></Tool>
      <Tool $w={26} aria-label="Battery">
        <Svg w={13} h={9} c="#fff"><path d="M4.500 1.500h7v6H3.500v-2M12.500 3.500v2M0 1h4M1 1v2.500h2V1M2 3.500v2.500" /><path d="M5.500 3h3v3h-3z" fill="#fff" /></Svg>
      </Tool>
      <Tool $w={26} aria-label="Network">
        <Svg w={11} c="#ccc"><path d="M.5 10A9.500 9.500 0 0 1 10 .8M3.200 10.500A7 7 0 0 1 10.500 3.500M5.800 10.500A4.800 4.800 0 0 1 10.500 6.200M8.300 10.500a2 2 0 0 1 2-2" /></Svg>
      </Tool>
      <Tool $w={26} aria-label="Volume">
        <Svg w={12} h={10} c="#fff"><path d="M.5 3.500h2L5 1v8L2.500 6.500h-2zM6.800 3.500q1 1.500 0 3M8.800 2q2 3 0 6M10.500.8q3 4.200 0 8.400" /></Svg>
      </Tool>
      <Lang $w={30}>ENG</Lang>
      <Clock>15:45<br />05/03/2021</Clock>
      <Tool $w={34} $h={30} aria-label="Notifications">
        <Svg w={19} h={20} c="none">
          <path d="M0 0h13v10H5l-2.500 3v-3H0z" fill="#fff" /><path d="M2 3h9M2 5h9M2 7h6" stroke="#333" />
          <circle cx="12.500" cy="13" r="6.500" fill="#333" stroke="#999" />
          <text x="7" y="16.500" fontSize="9" fontWeight="600" fill="#fff">10</text>
        </Svg>
      </Tool>
      <Rule $l={3} />
    </Tray>
  );
}

export default function App() {
  return (
    <Window>
      <GlobalStyle />
      <Header />
      <Tabs />
      <RibbonBar />
      <Workspace>
        <Canvas><Document /></Canvas>
        <ScrollBar>
          <button aria-label="Scroll up"><Svg w={6} h={4} c="none"><path d="M0 4l3-4 3 4z" fill="#666" /></Svg></button>
          <i /><b /><i />
          <button aria-label="Scroll down"><Svg w={6} h={4} c="none"><path d="M0 0h6L3 4z" fill="#666" /></Svg></button>
        </ScrollBar>
      </Workspace>
      <Status />
      <TaskBar>
        <Apps />
        <SystemTray />
      </TaskBar>
    </Window>
  );
}
